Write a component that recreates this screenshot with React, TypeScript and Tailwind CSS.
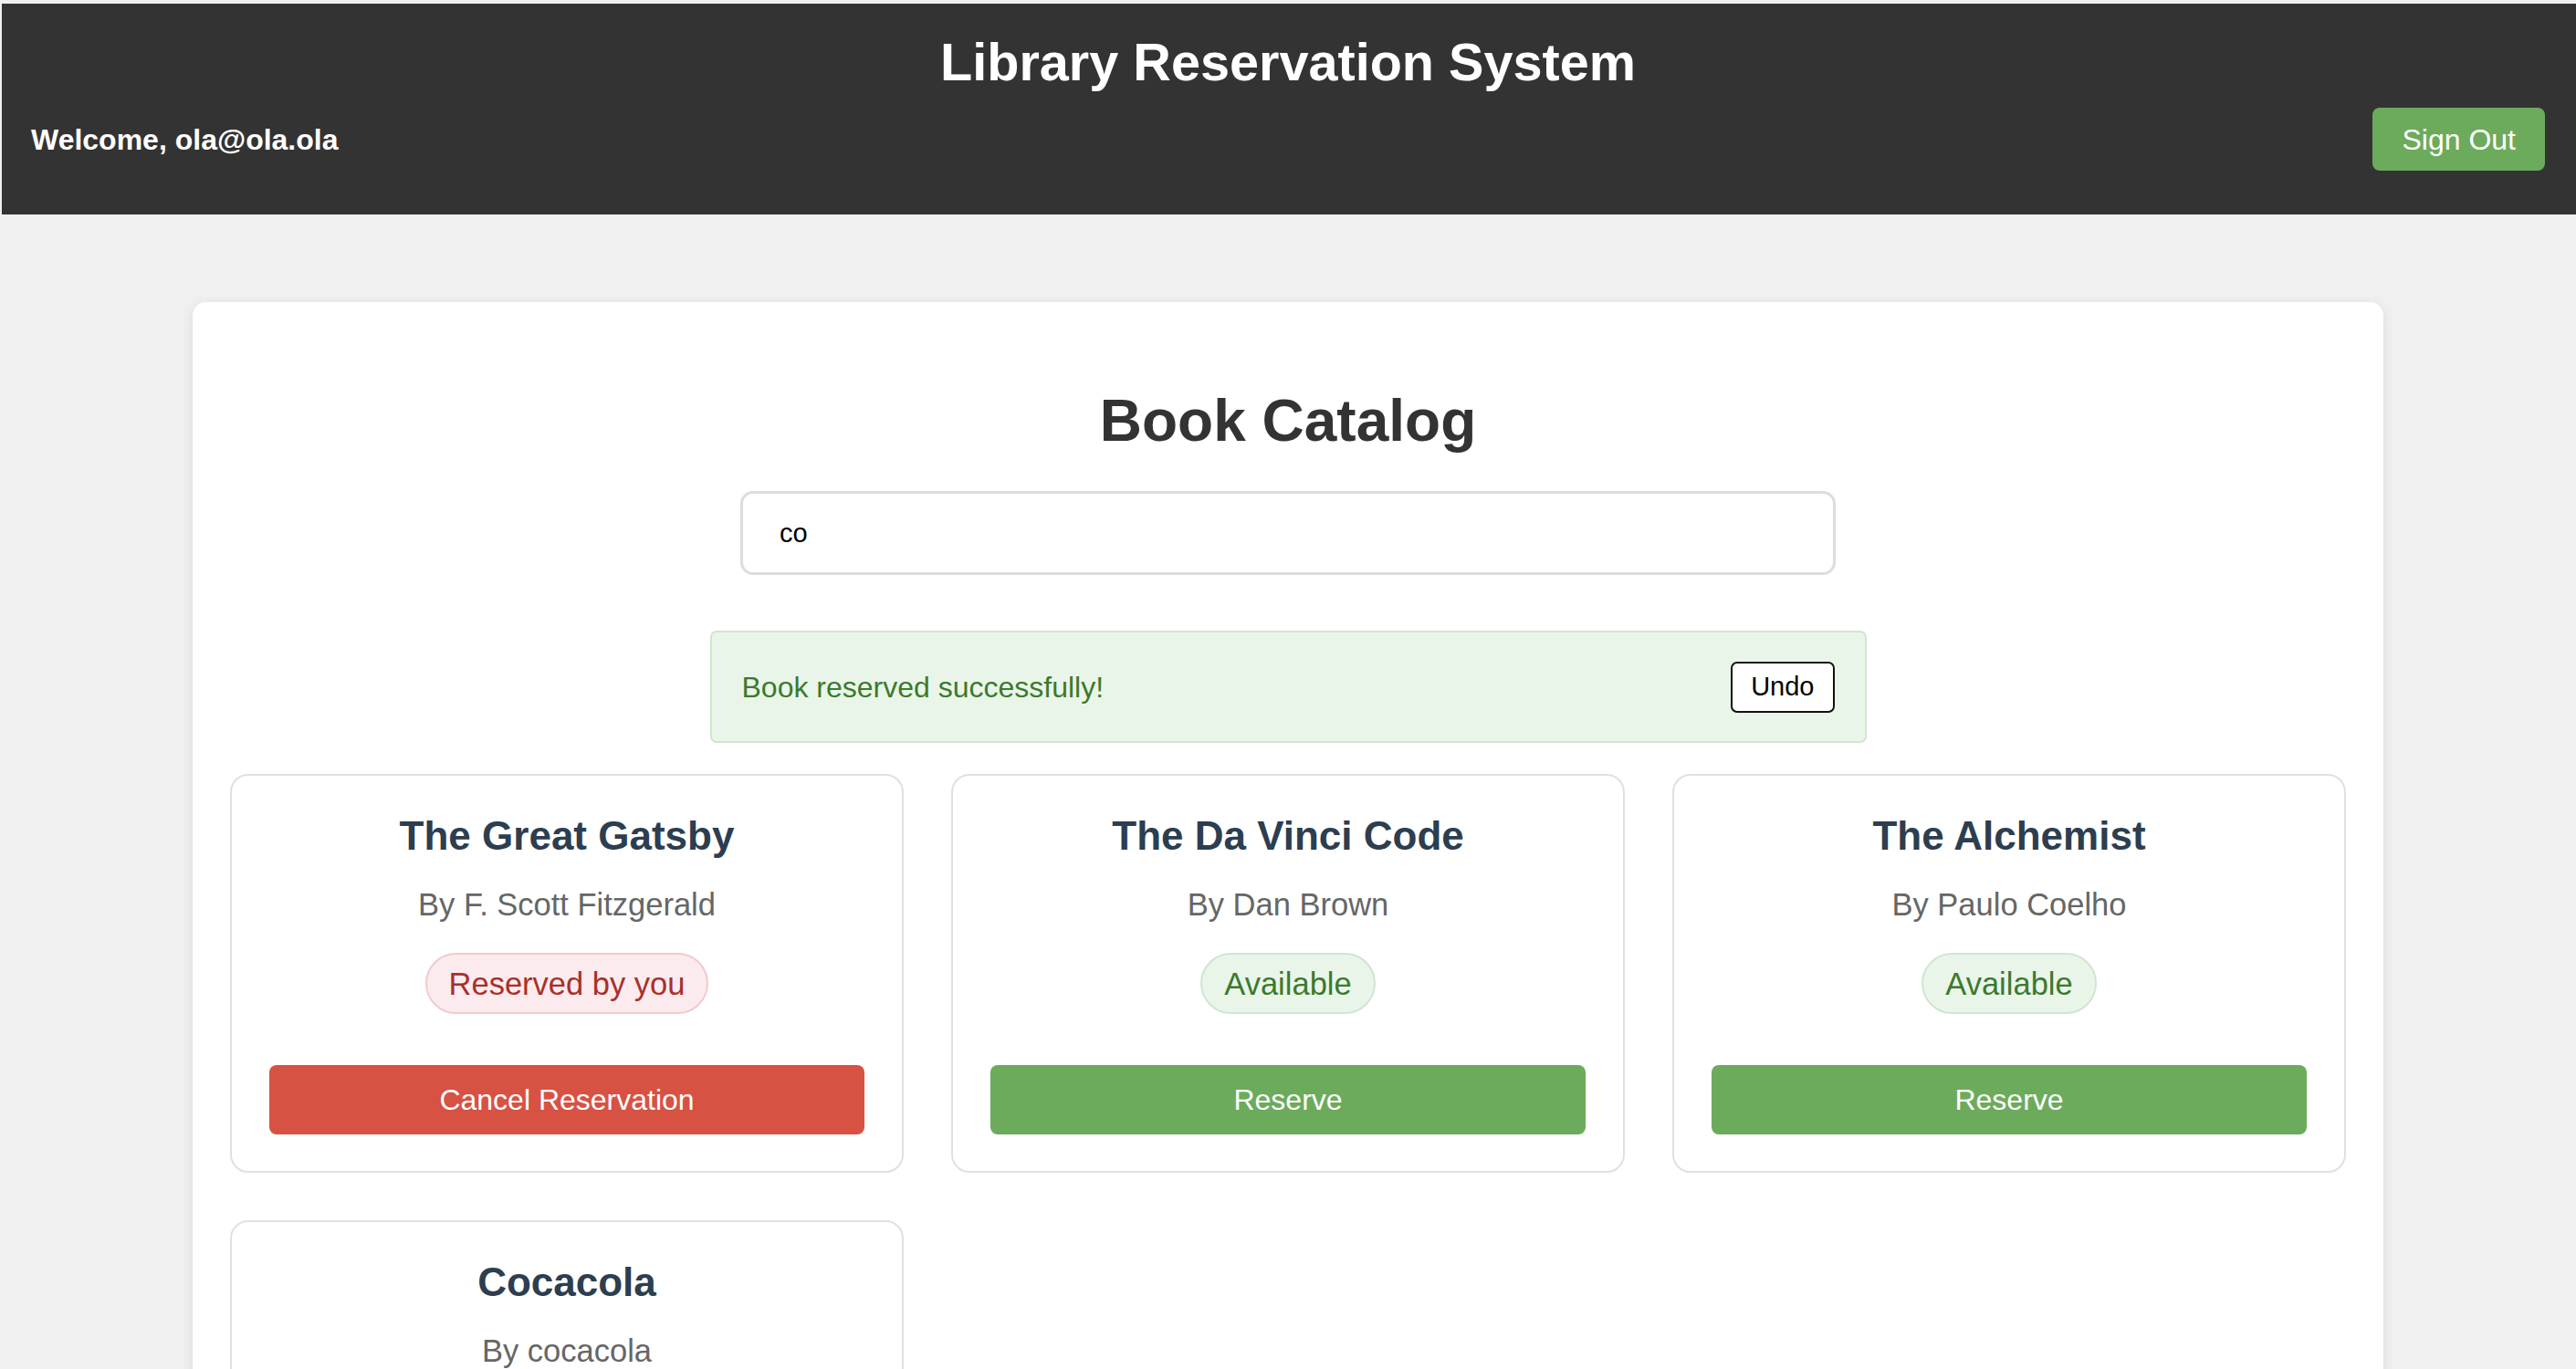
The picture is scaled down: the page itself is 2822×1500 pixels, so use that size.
import { useState } from "react";

interface Book {
  id: number;
  title: string;
  author: string;
  reservedByMe: boolean;
}

const books: Book[] = [
  { id: 1, title: "The Great Gatsby", author: "F. Scott Fitzgerald", reservedByMe: true },
  { id: 2, title: "The Da Vinci Code", author: "Dan Brown", reservedByMe: false },
  { id: 3, title: "The Alchemist", author: "Paulo Coelho", reservedByMe: false },
  { id: 4, title: "Cocacola", author: "cocacola", reservedByMe: false },
];

function BookCard({ book }: { book: Book }) {
  return (
    <div className="flex flex-col items-center rounded-[20px] border-2 border-[#e0e0e0] bg-white px-[41px] pt-[40px] pb-[40px] text-center">
      <h3 className="text-[44px] leading-[51px] font-bold text-[#2c3e50]">{book.title}</h3>
      <p className="mt-[30px] text-[34.5px] leading-[40px] text-[#666]">By {book.author}</p>
      {book.reservedByMe ? (
        <span className="mt-[33px] rounded-full border-2 border-[#f3c9cd] bg-[#fcebee] px-[24px] py-[11.5px] text-[34.5px] leading-[40px] text-[#a8302a]">
          Reserved by you
        </span>
      ) : (
        <span className="mt-[33px] rounded-full border-2 border-[#cfe6cf] bg-[#eaf5ea] px-[24px] py-[11.5px] text-[34.5px] leading-[40px] text-[#3b7a2c]">
          Available
        </span>
      )}
      {book.reservedByMe ? (
        <button className="mt-[56px] h-[76px] w-full rounded-[8px] bg-[#d75243] text-[32px] text-white">
          Cancel Reservation
        </button>
      ) : (
        <button className="mt-[56px] h-[76px] w-full rounded-[8px] bg-[#6cab5c] text-[32px] text-white">
          Reserve
        </button>
      )}
    </div>
  );
}

export default function App() {
  const [query, setQuery] = useState("co");

  return (
    <div className="min-h-screen bg-[#f0f0f0] pt-[4px] font-['Liberation_Sans',Arial,sans-serif]">
      <header className="ml-[2px] bg-[#333333] pl-[32px] pr-[34px] pt-[31px] pb-[48px] text-white">
        <h1 className="text-center text-[57.6px] leading-[66px] font-bold">Library Reservation System</h1>
        <div className="mt-[17px] flex items-center justify-between">
          <span className="text-[32px] font-bold">Welcome, ola@ola.ola</span>
          <button className="h-[69px] rounded-[8px] bg-[#6cab5c] px-[32px] text-[32px] text-white">Sign Out</button>
        </div>
      </header>

      <main className="mx-auto mt-[96px] w-[2400px] rounded-[15px] bg-white px-[41px] pt-[41px] pb-[60px] shadow-[0_3px_14px_rgba(0,0,0,0.09)]">
        <h2 className="mt-[52px] text-center text-[64px] leading-[74px] font-bold text-[#333]">Book Catalog</h2>

        <div className="mt-[40px] flex justify-center">
          <input
            value={query}
            onChange={(e) => setQuery(e.target.value)}
            className="h-[92px] w-[1200px] rounded-[14px] border-[3px] border-[#dddddd] bg-white px-[40px] text-[29px] text-black outline-none"
          />
        </div>

        <div className="mx-auto mt-[61px] flex h-[123px] w-[1267px] items-center justify-between rounded-[7px] border-2 border-[#cfe6cf] bg-[#eaf5ea] px-[33px]">
          <span className="text-[32px] text-[#3b7a2c]">Book reserved successfully!</span>
          <button className="h-[56px] rounded-[7px] border-2 border-[#111] bg-white px-[20px] text-[29px] text-black">Undo</button>
        </div>

        <div className="mt-[34px] grid grid-cols-3 gap-[52px]">
          {books.map((b) => (
            <BookCard key={b.id} book={b} />
          ))}
        </div>
      </main>
    </div>
  );
}
